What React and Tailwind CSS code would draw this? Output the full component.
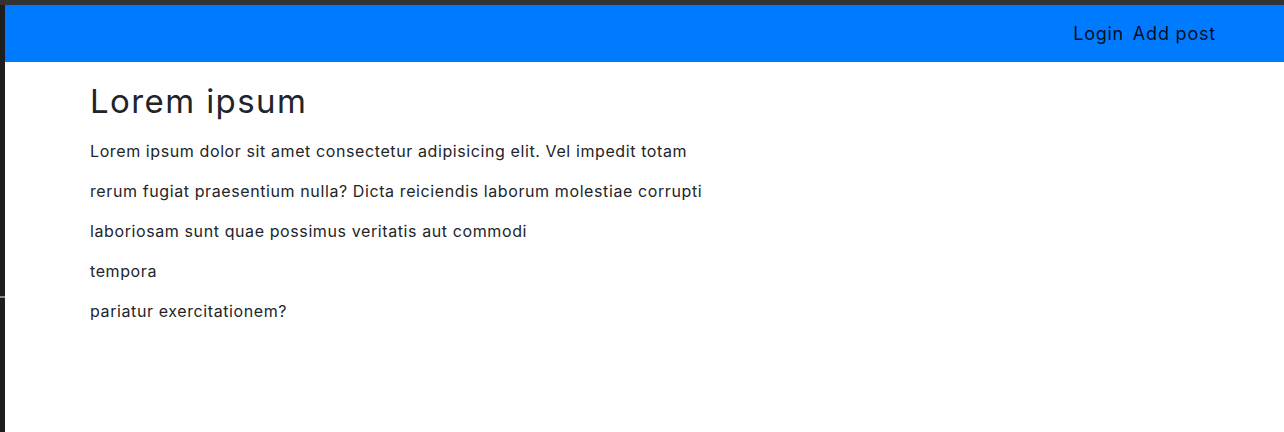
import React from "react";

const lines = [
  "Lorem ipsum dolor sit amet consectetur adipisicing elit. Vel impedit totam",
  "rerum fugiat praesentium nulla? Dicta reiciendis laborum molestiae corrupti",
  "laboriosam sunt quae possimus veritatis aut commodi",
  "tempora",
  "pariatur exercitationem?",
];

export default function App() {
  return (
    <div className="flex flex-col h-[432px] w-[1284px] bg-white overflow-hidden" style={{ fontFamily: "Inter, 'Open Sans', sans-serif" }}>
      {/* window chrome */}
      <div className="h-[5px] bg-[#333333] shrink-0"></div>
      <div className="flex flex-1 min-h-0">
        <div className="w-[5px] shrink-0 flex flex-col">
          <div className="h-[291px] bg-[#1e1e1e]"></div>
          <div className="h-[2px] bg-[#8a8a8a]"></div>
          <div className="flex-1 bg-[#1e1e1e]"></div>
        </div>

        <div className="flex-1 flex flex-col">
          {/* Navbar */}
          <nav className="h-[57px] bg-[#007bff] flex items-center justify-end pr-[68px]">
            <a className="text-[18px] text-black/90 tracking-[0.7px]">Login</a>
            <a className="text-[18px] text-black/90 tracking-[0.8px] ml-[9px]">Add post</a>
          </nav>

          {/* Content */}
          <main className="pl-[85px] pt-[20px] text-[#212529]">
            <h1 className="text-[33px] leading-[1.2] font-normal tracking-[1.4px] mb-[17px]">Lorem ipsum</h1>
            {lines.map((line, i) => (
              <p key={i} className="text-[16px] leading-[24px] mb-[16px] tracking-[0.6px]">{line}</p>
            ))}
          </main>
        </div>
      </div>
    </div>
  );
}
